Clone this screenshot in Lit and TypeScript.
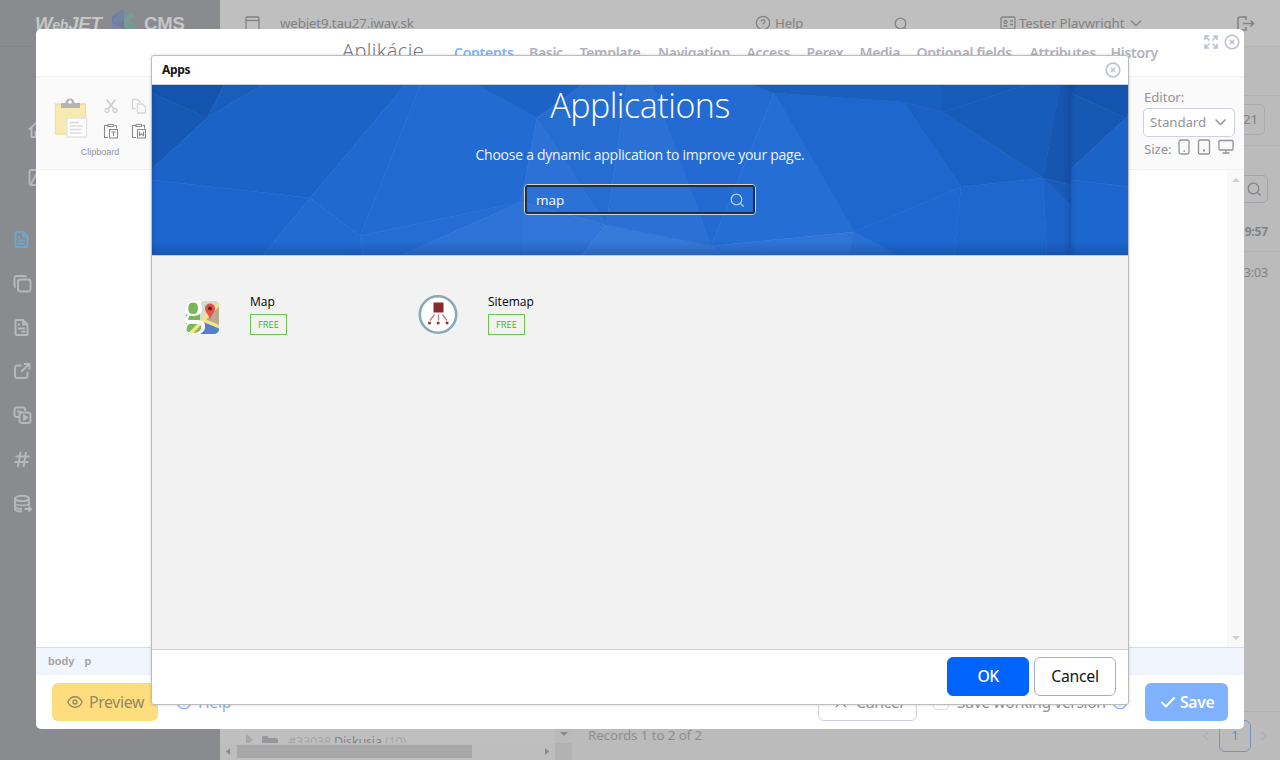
import { LitElement, html, svg, css } from "lit";
import { customElement } from "lit/decorators.js";

const icon = (w: number, h: number, body: unknown) =>
  html`<svg width=${w} height=${h} viewBox="0 0 ${w} ${h}">${body}</svg>`;

const FACETS: [string, string][] = [
  ["0,0 72,0 55,33 0,8", "#1354ae"],
  ["0,8 55,33 0,84", "#1659b5"],
  ["72,0 110,0 55,33", "#195ebc"],
  ["110,0 253,0 158,113 0,95 0,84 55,33", "#1b63c7"],
  ["0,95 158,113 111,170 0,170", "#1d66cf"],
  ["253,0 268,0 208,151 158,113", "#2069d1"],
  ["158,113 208,151 211,170 111,170", "#226bd2"],
  ["268,0 325,0 385,33 369,117 208,151", "#226bd3"],
  ["325,0 430,0 385,33", "#1c63c8"],
  ["208,151 369,117 250,170 211,170", "#256dd4"],
  ["250,170 369,117 369,170", "#2d73d5"],
  ["385,33 454,140 369,117", "#2c71d5"],
  ["385,33 430,0 475,0 454,140", "#266dd2"],
  ["369,117 454,140 430,170 369,170", "#3075d7"],
  ["454,140 559,161 570,170 430,170", "#367bda"],
  ["475,0 500,0 559,161 454,140", "#2a70d5"],
  ["500,0 600,0 622,8 559,161", "#236bd3"],
  ["622,8 702,147 559,161", "#256ed6"],
  ["559,161 702,147 696,170 570,170", "#3076d8"],
  ["702,147 745,170 696,170", "#2a70d4"],
  ["622,8 751,17 809,102 702,147", "#1d67cf"],
  ["600,0 790,0 790,27 751,17 622,8", "#185fc0"],
  ["751,17 790,27 891,93 809,102", "#1a61c6"],
  ["790,0 875,0 790,27", "#175bb9"],
  ["875,0 908,0 891,93 790,27", "#185cb9"],
  ["908,0 919,0 919,100 891,93", "#1655b0"],
  ["891,93 919,100 919,121", "#185bb9"],
  ["702,147 809,102 802,170 745,170", "#1e68d1"],
  ["809,102 891,93 895,170 802,170", "#1d67cf"],
  ["891,93 919,121 919,170 895,170", "#1c63c9"],
];

const gCircX = svg`<circle cx="8" cy="8" r="6.8"/><path d="M6 6l4 4M10 6l-4 4"/>`;
const gHelp = svg`<circle cx="8" cy="8" r="6.7"/><path d="M6.2 6.6a1.8 1.8 0 1 1 2.7 1.5c-.6.3-.9.6-.9 1.2M8 11.2v.9"/>`;
const gSearch = svg`<circle cx="6.5" cy="6.5" r="5.3"/><path d="M10.4 10.4L13.6 13.6"/>`;

@customElement("app-banner")
export class AppBanner extends LitElement {
  static styles = css`
    :host { display: block; position: relative; height: 170px; overflow: hidden; border-bottom: 1px solid #b9cfe8; }
    .bg { position: absolute; inset: 0; }
    .content { position: relative; display: flex; flex-direction: column; align-items: center; color: #fff; font-family: "Open Sans", sans-serif; }
    h1 { margin: 0; font-size: 34px; font-weight: 300; line-height: 40px; letter-spacing: -0.48px; }
    p { margin: 20px 0 0; font-size: 14px; line-height: 20px; letter-spacing: -0.26px; color: #eef4fd; }
    .search { margin-top: 19px; box-sizing: border-box; width: 232px; height: 31px; border: 1px solid #d9d4cc; border-radius: 4px; }
    .inner { box-sizing: border-box; height: 29px; border: 2px solid #1a2f50; border-radius: 3px; display: flex; justify-content: space-between; align-items: center; padding: 0 9px; font-size: 13.5px; }
    .inner svg { fill: none; stroke: #b5cdf2; stroke-width: 1.3; }
  `;
  render() {
    return html`
      <svg class="bg" width="976" height="170">
        <defs>
          <g id="tile">
            ${FACETS.map(([p, c]) => svg`<polygon points=${p} fill=${c} stroke=${c} stroke-width=".6"/>`)}
          </g>
          <linearGradient id="bot" x1="0" y1="0" x2="0" y2="1"><stop offset="0" stop-color="#0a2c68" stop-opacity="0"/><stop offset="1" stop-color="#0a2c68" stop-opacity=".3"/></linearGradient>
          <linearGradient id="edge"><stop offset="0" stop-color="#0a2c68" stop-opacity="0"/><stop offset="1" stop-color="#0a2c68" stop-opacity=".22"/></linearGradient>
          <linearGradient id="edgel"><stop offset="0" stop-color="#0a2c68" stop-opacity=".16"/><stop offset="1" stop-color="#0a2c68" stop-opacity="0"/></linearGradient>
        </defs>
        <use href="#tile"/>
        <use href="#tile" x="919"/>
        <rect x="911" width="8" height="170" fill="url(#edge)"/>
        <rect x="919" width="6" height="170" fill="url(#edgel)"/>
        <rect width="6" height="170" fill="url(#edgel)"/>
        <rect y="156" width="976" height="14" fill="url(#bot)"/>
      </svg>
      <div class="content">
        <h1>Applications</h1>
        <p>Choose a dynamic application to improve your page.</p>
        <div class="search"><div class="inner"><span>map</span>${icon(14, 14, gSearch)}</div></div>
      </div>`;
  }
}

@customElement("apps-dialog")
export class AppsDialog extends LitElement {
  static styles = css`
    :host { display: flex; flex-direction: column; box-sizing: border-box; background: #fff; border: 1px solid #bcbcbc; border-radius: 3px; overflow: hidden; font-family: "Noto Sans", sans-serif; box-shadow: 0 0 3px rgba(0,0,0,.18); }
    header { box-sizing: border-box; height: 29px; display: flex; align-items: center; justify-content: space-between; padding: 0 7px 1px 10px; border-bottom: 1px solid #c5d3e3; font-size: 12px; font-weight: 700; letter-spacing: -.3px; color: #13151b; }
    header svg { fill: none; stroke: #bfc2d4; stroke-width: 1.7; }
    main { flex: 1; background: #f2f2f2; display: flex; padding: 36px 30px; font-family: "Open Sans", sans-serif; }
    .app { width: 238px; display: flex; gap: 28px; }
    .pic { width: 40px; height: 50px; display: flex; align-items: center; justify-content: center; }
    .pic.up { height: 46px; width: 36px; margin-right: 4px; }
    .pic svg { flex: none; }
    .name { font-size: 12px; line-height: 20px; color: #000; }
    .free { box-sizing: border-box; width: 37px; height: 21px; margin-top: 2px; border: 1px solid #6ac74b; font-size: 9.3px; line-height: 19px; text-align: center; color: #3fb523; }
    footer { box-sizing: border-box; height: 55px; display: flex; justify-content: flex-end; gap: 5px; padding: 7px 12px 0 0; border-top: 1px solid #cfcfcf; }
    .btn { box-sizing: border-box; width: 82px; height: 39px; border-radius: 6px; border: 1px solid #a9acbf; display: flex; align-items: center; justify-content: center; padding-bottom: 1px; font-size: 15.8px; letter-spacing: -.25px; color: #13151b; background: #fff; }
    .ok { background: #0063fb; border-color: #0063fb; color: #fff; font-weight: 500; letter-spacing: -.6px; }
  `;
  render() {
    return html`
      <header><span>Apps</span>${icon(16, 16, gCircX)}</header>
      <app-banner></app-banner>
      <main>
        <div class="app">
          <div class="pic">
            <svg width="33" height="33" viewBox="0 0 33 33">
              <defs><clipPath id="r"><rect width="33" height="33" rx="5"/></clipPath></defs>
              <g clip-path="url(#r)">
                <rect width="33" height="33" fill="#79b65a"/>
                <path d="M14 0H33V20L14 24z" fill="#d5ddca"/>
                <path d="M33 5L18 20 33 26z" fill="#bba891"/>
                <path d="M13 33L18 21 33 27V33z" fill="#5580cc"/>
                <path d="M0 33L12 22 15 33z" fill="#87bd55"/>
                <path d="M2 35L34 2M17 19L34 26" stroke="#f3e385" stroke-width="3.5"/>
                <text x="-5" y="23" font-family="Liberation Serif, serif" font-size="50" fill="#fff">g</text>
                <path d="M24 19C23.5 14 19 12 19 7.5a5 5 0 0 1 10 0C29 12 24.5 14 24 19z" fill="#e2544b"/>
                <circle cx="24" cy="7.5" r="2" fill="#6a1f1c"/>
              </g>
            </svg>
          </div>
          <div><div class="name">Map</div><div class="free">FREE</div></div>
        </div>
        <div class="app">
          <div class="pic up">
            <svg width="40" height="40" viewBox="0 0 40 40">
              <circle cx="20" cy="19.5" r="18.2" fill="#fff" stroke="#8aa8b8" stroke-width="2.6"/>
              <path d="M15.5 7.500h10v10h-10z" fill="#8c2b2e"/>
              <path d="M16.500 19.500L12 25.500M20.500 19.500v6M24.500 19.500l4.500 6" stroke="#b98283" stroke-width="1.3"/>
              <path d="M10.200 26.700h2.600v2.600h-2.600zM18.900 26.700h2.600v2.600h-2.600zM27.800 26.700h2.600v2.600h-2.600z" fill="#8c2b2e"/>
            </svg>
          </div>
          <div><div class="name">Sitemap</div><div class="free">FREE</div></div>
        </div>
      </main>
      <footer><div class="btn ok">OK</div><div class="btn">Cancel</div></footer>`;
  }
}

const TABS: [string, number][] = [["Contents", 75], ["Basic", 50.5], ["Template", 78.5], ["Navigation", 88.5], ["Access", 60], ["Perex", 53], ["Media", 57], ["Optional fields", 113], ["Attributes", 81], ["History", 48]];

@customElement("editor-dialog")
export class EditorDialog extends LitElement {
  static styles = css`
    :host { display: flex; flex-direction: column; background: #fff; border-radius: 5px; overflow: hidden; font-family: "Noto Sans", sans-serif; color: #939497; }
    svg { fill: none; stroke: currentColor; stroke-width: 1.3; flex: none; }
    header { height: 47px; display: flex; padding-left: 306px; }
    h2 { margin: 0; width: 112px; font-size: 20px; font-weight: 300; line-height: 44px; letter-spacing: .3px; white-space: nowrap; color: #77787b; }
    .tab { font-size: 14px; font-weight: 600; line-height: 47px; letter-spacing: -.3px; color: #b1b2bb; white-space: nowrap; flex: none; }
    .tab.on { color: #7fb1fd; }
    .win { display: flex; gap: 5px; margin-left: 44px; padding-top: 5px; color: #bcc0d2; }
    .win svg { stroke-width: 1.6; }
    .tools { box-sizing: border-box; height: 94px; border-top: 1px solid #f3f3f3; border-bottom: 1px solid #f0f2fa; background: #fafafa; display: flex; justify-content: space-between; }
    .clip { width: 110px; padding: 17px 0 0 18px; }
    .clip .row { display: flex; gap: 15px; }
    .mini { display: grid; grid-template-columns: 16px 16px; gap: 9px 12px; padding-top: 4px; }
    .cap { font: 9px/12px "Liberation Sans", sans-serif; width: 92px; text-align: center; margin-top: 7px; }
    .opts { width: 100px; padding-top: 11px; font-size: 13.3px; line-height: 18px; letter-spacing: -.1px; }
    .sel { box-sizing: border-box; width: 92px; height: 29px; margin: 2px 0 3px -1px; border: 1px solid #cdd0e2; border-radius: 5px; background: #fff; display: flex; align-items: center; justify-content: space-between; padding: 0 7px 1px 6px; }
    .size { display: flex; gap: 7px; }
    .size svg { margin-top: -1px; }
    .size span { width: 27px; }
    .work { flex: 1; display: flex; justify-content: flex-end; }
    .sb { width: 17px; background: #f8f8f8; display: flex; flex-direction: column; justify-content: space-between; align-items: center; padding: 7px 0 6px; box-sizing: border-box; }
    .sb svg { fill: #cfcfcf; stroke: none; }
    .path { box-sizing: border-box; height: 28px; border-top: 1px solid #dcdde1; background: #f1f5fd; display: flex; gap: 10px; padding-left: 12px; font: 700 11px/26px "Liberation Sans", sans-serif; letter-spacing: .05px; color: #a3a3a4; }
    footer { box-sizing: border-box; height: 54px; padding: 8px 16px 0; display: flex; align-items: flex-start; font-size: 15.8px; letter-spacing: -.35px; white-space: nowrap; }
    .b { box-sizing: border-box; height: 38px; border-radius: 6px; display: flex; align-items: center; gap: 6px; padding-left: 15px; flex: none; }
    .prev { width: 106px; background: #fedd7e; color: #948864; }
    .hl { width: 642px; margin-left: 18px; padding: 0; color: #7fb1fd; }
    .can { width: 99px; border: 1px solid #ccd0e0; gap: 8px; }
    .ver { gap: 8px; width: 228px; padding: 0 0 0 16px; }
    .box { box-sizing: border-box; width: 16px; height: 16px; border: 1px solid #dadde8; border-radius: 4px; }
    .ver span { width: 149px; letter-spacing: -.45px; }
    .ver svg { color: #7fb1fd; margin-left: -2px; }
    .save { width: 83px; background: #80b1fd; color: #fff; font-weight: 600; gap: 4px; }
  `;
  render() {
    return html`
      <header>
        <h2>Aplikácie</h2>
        ${TABS.map(([t, w], i) => html`<div class="tab ${i ? "" : "on"}" style="width:${w}px">${t}</div>`)}
        <div class="win">
          ${icon(16, 16, svg`<path d="M2.5 2.5l4 4M13.5 2.5l-4 4M2.5 13.5l4-4M13.5 13.5l-4-4M2 6V2h4M10 2h4v4M14 10v4h-4M6 14H2v-4"/>`)}
          ${icon(16, 16, gCircX)}
        </div>
      </header>
      <div class="tools">
        <div class="clip">
          <div class="row">
            <svg width="34" height="44" viewBox="0 0 34 44">
              <path d="M1.5 10h30v30h-30z" fill="#f7eab0" stroke="#f0dfa0"/>
              <path d="M7 14V9h4.500a4.500 4.500 0 0 1 9 0H26v5z" fill="#b4b4b4" stroke="none"/><circle cx="16" cy="8" r="1.700" fill="#fff" stroke="none"/>
              <path d="M13 24h19.500v19H13z" fill="#fdfdfd" stroke="#e3e3e3"/>
              <path d="M16 28.500h9M16 32h13M16 35.500h11M16 39h11" stroke="#dbdbdb"/>
            </svg>
            <div class="mini">
              ${icon(16, 16, svg`<g stroke="#cfcfcf"><path d="M3.5 1.5L11 11M12.5 1.5L5 11" stroke-width="1.8"/><circle cx="4" cy="12.5" r="2"/><circle cx="12" cy="12.5" r="2"/></g>`)}
              ${icon(16, 16, svg`<g stroke="#d8d8d8"><path d="M4.5 10.5H1.5v-9h5l3 3M6.5 6h5l3 3v6h-8z"/></g>`)}
              ${[0, 1].map((i) => icon(16, 16, svg`<g stroke="#8a8a8a" stroke-width="1.1"><path d="M5 14.5H1.5v-12h3M11.5 2.5h2v3M5 1.5h5.5v2H5z"/><path d="M6.5 6.5h8v8.500h-8z"/>${i ? svg`<path d="M8.5 8.5v4l2-1.500 2 1.500v-4"/>` : svg`<path d="M8.5 9h4M10.5 9v4"/>`}</g>`))}
            </div>
          </div>
          <div class="cap">Clipboard</div>
        </div>
        <div class="opts">
          <div>Editor:</div>
          <div class="sel"><span>Standard</span>${icon(13, 8, svg`<path d="M1.5 1.5l5 5 5-5" stroke-width="1.5"/>`)}</div>
          <div class="size"><span>Size:</span>
            ${icon(12, 16, svg`<rect x="1" y="1" width="10" height="14" rx="2"/><path d="M5.5 12h1.5"/>`)}
            ${icon(14, 16, svg`<rect x="1.5" y="1" width="11" height="14" rx="1.5"/><path d="M6 11.5h2" stroke-width="2.2"/>`)}
            ${icon(16, 16, svg`<rect x="1" y="1.5" width="14" height="9.5" rx="1"/><path d="M8 11v3M4.5 14h7"/>`)}
          </div>
        </div>
      </div>
      <div class="work"><div class="sb">${icon(8, 5, svg`<path d="M0 5L4 1l4 4z"/>`)}${icon(8, 5, svg`<path d="M0 0L4 4l4-4z"/>`)}</div></div>
      <div class="path"><span>body</span><span>p</span></div>
      <footer>
        <div class="b prev">${icon(16, 14, svg`<path d="M.8 7C4 0 12 0 15.2 7 12 14 4 14 .8 7z"/><circle cx="8" cy="7" r="2"/>`)}<span>Preview</span></div>
        <div class="b hl">${icon(16, 16, gHelp)}<span>Help</span></div>
        <div class="b can">${icon(14, 14, svg`<path d="M2 2l10 10M12 2L2 12"/>`)}<span>Cancel</span></div>
        <div class="b ver"><i class="box"></i><span>Save working version</span>${icon(16, 16, gHelp)}</div>
        <div class="b save">${icon(16, 12, svg`<path d="M1.5 6l4.500 4.500 8.500-9" stroke-width="2"/>`)}<span>Save</span></div>
      </footer>`;
  }
}

const doc = (extra: unknown) => svg`<path d="M3.5 2h6.500l4.500 4.500V16a1 1 0 0 1-1 1h-10a1 1 0 0 1-1-1V3a1 1 0 0 1 1-1zM10 2v4.500h4.500"/>${extra}`;
const NAV = [
  doc(svg`<path d="M5 7h2M5 10.5h7M5 13.8h7"/>`),
  svg`<rect x="5" y="5.5" width="12.5" height="12" rx="2.5"/><path d="M2.5 13.5a2 2 0 0 1-1-2V4a2 2 0 0 1 2-2h8a2 2 0 0 1 2 1"/>`,
  doc(svg`<path d="M5 6.5h2M5 10.5h7M8.5 13.8h4"/>`),
  svg`<path d="M8.5 3.5H4a2 2 0 0 0-2 2V14a2 2 0 0 0 2 2h8.500a2 2 0 0 0 2-2V9.500M8 10l8-8M11 2h5.500v5.500"/>`,
  svg`<path d="M6 11H3.500a2 2 0 0 1-2-2V3.500a2 2 0 0 1 2-2H10a2 2 0 0 1 2 2V5M4 5.500h4"/><rect x="6.5" y="6.5" width="11" height="10.5" rx="2.5"/><path d="M11 9.5v4l3-2z" fill="currentColor"/>`,
  svg`<path d="M7.5 2L5 17M13 2l-2.500 15M2.500 6.500h14M1.500 12h14"/>`,
  svg`<ellipse cx="9" cy="4.5" rx="7" ry="2.8"/><path d="M2 4.5V15c0 1.500 3 2.500 7 2.500M16 4.500V12M2 9.500c1 2.500 13 2.500 14 0M2 13c1 1.500 4 2 7 2M11.500 15h6.500M15.500 12.500l2.500 2.500-2.500 2.500"/>`,
];

@customElement("app-root")
export class AppRoot extends LitElement {
  static styles = css`
    :host { display: grid; grid-template-columns: 220px 1fr; position: relative; width: 1280px; height: 760px; overflow: hidden; background: #bbb; font-family: "Noto Sans", sans-serif; color: #828386; }
    svg { fill: none; stroke: currentColor; stroke-width: 1.3; flex: none; }
    aside { background: #8a8b8f; color: #b7b8bb; }
    .brand { box-sizing: border-box; height: 47px; border-bottom: 1px solid #858689; display: flex; padding: 8px 0 0 35px; color: #c6c6c8; font: 700 18.5px/31px "Liberation Sans", sans-serif; }
    .brand b { width: 76px; font-style: italic; letter-spacing: -.2px; }
    .brand small { font-size: 14px; }
    .brand svg { margin: 1px 6px 0 0; stroke: none; opacity: .7; }
    .brand em { font-style: normal; letter-spacing: -.1px; }
    .top { display: flex; flex-direction: column; gap: 28px; padding: 73px 0 0 27px; height: 183px; box-sizing: border-box; }
    .nav { display: flex; flex-direction: column; gap: 25px; padding: 0 0 0 13px; }
    .nav svg, .top svg { stroke-width: 1.9; display: block; }
    .nav svg:first-child { color: #75a5c4; }
    section { display: flex; flex-direction: column; min-width: 0; font-size: 13.3px; letter-spacing: -.15px; }
    .bar { box-sizing: border-box; height: 47px; background: #bfbfbf; border-bottom: 1px solid #b5b5b5; display: flex; align-items: center; padding: 0 0 0 25px; white-space: nowrap; }
    .bar span svg { display: block; margin-top: 1px; }
    .site { width: 475px; margin-left: 20px; }
    .hp { width: 119px; margin-left: 4px; }
    .user { width: 109px; margin: 0 2px 0 3px; }
    .s { margin-right: 92px; }
    .out { margin-left: 95px; }
    .body { flex: 1; display: grid; grid-template-rows: 49px 50px 106px 1fr 49px; }
    .line { border-bottom: 1px solid #b1b2b4; display: flex; justify-content: flex-end; padding-right: 15px; }
    .line.mid { flex-direction: column; align-items: flex-end; justify-content: flex-start; padding-right: 12px; }
    .num { box-sizing: border-box; width: 60px; height: 31px; margin-top: 8px; border: 1px solid #a9abb0; border-radius: 5px; text-align: right; padding-right: 6px; line-height: 29px; }
    .find { box-sizing: border-box; width: 60px; height: 28px; flex: none; margin-top: 29px; border: 1px solid #a2a4ad; border-radius: 5px; display: flex; align-items: center; justify-content: flex-end; padding-right: 6px; }
    .dt { font-size: 12px; font-weight: 700; line-height: 20px; margin-top: 19px; }
    .dt2 { text-align: right; padding: 12px 12px 0 0; font-size: 12.5px; }
    .foot { display: flex; border-top: 1px solid #b1b2b4; }
    .tree { width: 352px; flex: none; display: grid; grid-template-columns: 335px 17px; grid-template-rows: 31px 17px; }
    .node { background: #bfbfbf; display: flex; gap: 9px; align-items: flex-end; padding-left: 26px; overflow: hidden; font-size: 12.5px; color: #a4a5a7; line-height: 18px; }
    .node svg { stroke: none; fill: #96979b; }
    .node svg:first-child { fill: #a6a7aa; }
    .node span { margin: 0 0 -8px 1px; }
    .node b { font-weight: 400; color: #828386; }
    .vs { background: #bababa; display: flex; justify-content: center; padding-top: 20px; box-sizing: border-box; }
    .vs svg, .hs svg { stroke: none; fill: #8b8b8b; }
    .hs { background: #bdbdbd; display: flex; align-items: center; justify-content: space-between; padding: 0 6px; }
    .hs i { width: 235px; height: 13px; background: #a7a7a7; margin-right: 66px; }
    .cor { background: #b2b2b2; }
    .rec { width: 631px; flex: none; padding-left: 16px; line-height: 46px; color: #8d8e92; box-sizing: border-box; letter-spacing: -.08px; }
    .pg { display: flex; gap: 10px; align-items: center; height: 48px; color: #afafb0; }
    .pg div { box-sizing: border-box; width: 32px; height: 32px; border: 1px solid #7794c0; border-radius: 6px; color: #6f8dba; text-align: center; line-height: 29px; }
    editor-dialog { position: absolute; left: 36px; top: 29px; width: 1208px; height: 700px; }
    apps-dialog { position: absolute; left: 151px; top: 55px; width: 978px; height: 650px; }
  `;
  render() {
    return html`
      <aside>
        <div class="brand"><b>W<small>eb</small>JET</b>
          <svg width="27" height="28" viewBox="0 0 27 28"><path d="M13 0v22L1 14V7z" fill="#6875a6"/><path d="M13 0l12 7-7 4 7 5-12 6z" fill="#78a394"/><path d="M1 14l12 6v8L1 20z" fill="#7983b6"/><path d="M13 12l12 4v5l-12 7z" fill="#6ca28d"/><path d="M13 0l6 4-12 11-6-3z" fill="#7288b0" opacity=".6"/></svg>
          <em>CMS</em></div>
        <div class="top">
          ${icon(20, 20, svg`<path d="M2 9.5L10 2l8 7.500M4.500 8v9h4v-5h3v5h4V8"/>`)}
          ${icon(20, 20, svg`<rect x="2.5" y="2" width="15" height="15" rx="2"/><path d="M4 16l6-11 5 8"/>`)}
        </div>
        <div class="nav">${NAV.map((n) => icon(19, 19, n))}</div>
      </aside>
      <section>
        <div class="bar">
          ${icon(15, 15, svg`<rect x="1" y="1" width="13" height="13" rx="1"/><path d="M1 4.5h13"/>`)}
          <span class="site">webjet9.tau27.iway.sk</span>
          ${icon(16, 16, gHelp)}<span class="hp">Help</span>
          <span class="s">${icon(14, 14, gSearch)}</span>
          ${icon(16, 14, svg`<rect x="1" y="1" width="14" height="12" rx="1.5"/><circle cx="5.5" cy="6" r="1.5"/><path d="M3.5 10h4M10 5h3M10 8.5h3"/>`)}
          <span class="user">Tester Playwright</span>
          ${icon(12, 8, svg`<path d="M1 1.5l5 5 5-5"/>`)}
          <span class="out">${icon(18, 16, svg`<path d="M7 1H3a2 2 0 0 0-2 2v9a2 2 0 0 0 2 2h6v-3M7 1h2v3M6 7.5h10.500M13.500 4.500l3 3-3 3" stroke-width="1.6"/>`)}</span>
        </div>
        <div class="body">
          <div class="line"></div>
          <div class="line"><div class="num">21</div></div>
          <div class="line mid"><div class="find">${icon(14, 14, gSearch)}</div><div class="dt">9:57</div></div>
          <div class="dt2">3:03</div>
          <div class="foot">
            <div class="tree">
              <div class="node">${icon(7, 10, svg`<path d="M0 0l7 7-7 5z"/>`)}${icon(16, 7, svg`<path d="M0 9V2a2 2 0 0 1 2-2h3l2 2h7a2 2 0 0 1 2 2v5z"/>`)}<span>#33038 <b>Diskusia</b> (10)</span></div>
              <div class="vs">${icon(8, 5, svg`<path d="M0 0l4 4 4-4z"/>`)}</div>
              <div class="hs">${icon(4, 7, svg`<path d="M4 0L0 3.5 4 7z"/>`)}<i></i>${icon(4, 7, svg`<path d="M0 0l4 3.500L0 7z"/>`)}</div>
              <div class="cor"></div>
            </div>
            <div class="rec">Records 1 to 2 of 2</div>
            <div class="pg">${icon(6, 10, svg`<path d="M5 1L1 5l4 4"/>`)}<div>1</div>${icon(6, 10, svg`<path d="M1 1l4 4-4 4"/>`)}</div>
          </div>
        </div>
      </section>
      <editor-dialog></editor-dialog>
      <apps-dialog></apps-dialog>`;
  }
}
